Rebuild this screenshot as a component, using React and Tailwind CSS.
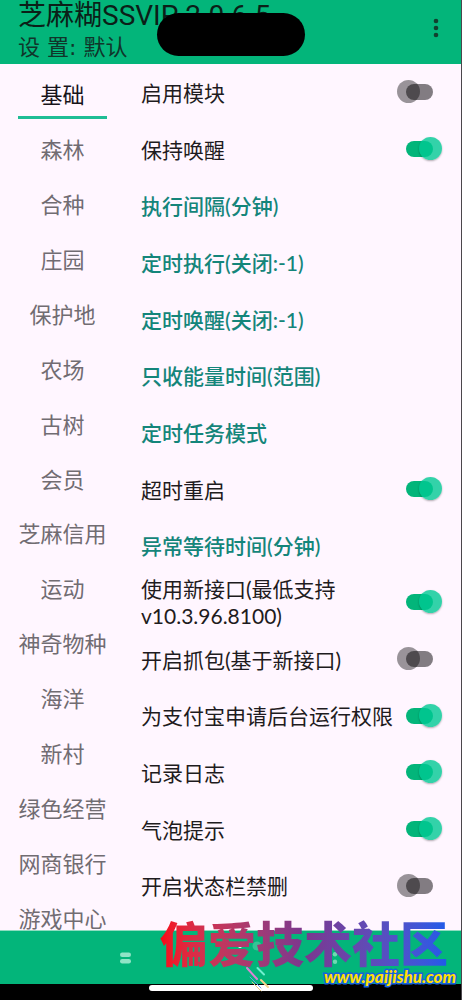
import { useState } from "react";

const tabs = [
  "基础", "森林", "合种", "庄园", "保护地", "农场", "古树", "会员",
  "芝麻信用", "运动", "神奇物种", "海洋", "新村", "绿色经营", "网商银行", "游戏中心",
];

const settings = [
  { label: "启用模块", on: false },
  { label: "保持唤醒", on: true },
  { label: "执行间隔(分钟)" },
  { label: "定时执行(关闭:-1)" },
  { label: "定时唤醒(关闭:-1)" },
  { label: "只收能量时间(范围)" },
  { label: "定时任务模式" },
  { label: "超时重启", on: true },
  { label: "异常等待时间(分钟)" },
  { label: "使用新接口(最低支持v10.3.96.8100)", on: true },
  { label: "开启抓包(基于新接口)", on: false },
  { label: "为支付宝申请后台运行权限", on: true },
  { label: "记录日志", on: true },
  { label: "气泡提示", on: true },
  { label: "开启状态栏禁删", on: false },
];

function SwitchRow({ label, on }) {
  const [checked, setChecked] = useState(on);
  return (
    <label className="flex min-h-0 flex-1 items-center justify-between text-[#1e1b20]">
      <span className="max-w-[256px]">{label}</span>
      <input
        type="checkbox"
        role="switch"
        checked={checked}
        onChange={(e) => setChecked(e.target.checked)}
        className="relative mr-2 h-4 w-[27px] shrink-0 appearance-none rounded-full bg-[#827c82] before:absolute before:-left-[9px] before:-top-1 before:size-[23px] before:rounded-full before:bg-black/40 checked:bg-[#03b57a] checked:before:left-[13px] checked:before:bg-[rgba(0,201,147,0.8)] checked:before:shadow-[0_1px_2px_rgba(0,0,0,0.3)]"
      />
    </label>
  );
}

function ValueRow({ label }) {
  return (
    <button type="button" className="flex min-h-0 flex-1 items-center text-left font-medium text-[#14857a]">
      {label}
    </button>
  );
}

function Header() {
  return (
    <header className="relative flex h-16 shrink-0 items-start justify-between overflow-hidden bg-[#03b57a] px-[18px]">
      <div>
        <h1 className="h-8 whitespace-nowrap font-['Roboto','Noto_Sans_CJK_SC',sans-serif] text-[28px] leading-8 text-[#0b1f18]">芝麻糊SSVIP 2.0.6.5</h1>
        <p className="whitespace-pre font-['DejaVu_Sans','Noto_Sans_CJK_SC',sans-serif] text-[22px] leading-8 text-[#10352a]">设 置: 默认</p>
      </div>
      <button type="button" aria-label="更多选项" className="mt-4 flex h-6 w-[14px] items-center justify-center">
        <svg viewBox="0 0 6 20" className="h-5 w-[6px] fill-[#12402f]">
          <circle cx="3" cy="3" r="2.3" />
          <circle cx="3" cy="10" r="2.3" />
          <circle cx="3" cy="17" r="2.3" />
        </svg>
      </button>
      <div className="absolute left-1/2 top-[13px] h-[43px] w-[148px] -translate-x-1/2 rounded-full bg-black" />
    </header>
  );
}

function Footer() {
  return (
    <footer className="relative shrink-0">
      <nav className="grid h-[54px] grid-cols-3 items-center border-t border-[#8fdcc0] bg-[#03b57a] px-6">
        <button type="button" aria-label="菜单" className="flex justify-center pl-[66px]">
          <svg viewBox="0 0 12 12" className="size-3 fill-[#90e4c6]">
            <rect y="0.5" width="11" height="4.5" rx="2.2" />
            <rect y="7" width="11" height="4.5" rx="2.2" />
          </svg>
        </button>
        <button type="button" aria-label="主页" className="flex justify-center pb-6 pl-10">
          <svg viewBox="0 0 24 10" className="h-[10px] w-6">
            <circle cx="2" cy="5" r="2" fill="#fff" />
            <circle cx="19" cy="5" r="4.5" fill="#34c596" />
          </svg>
        </button>
        <button type="button" aria-label="返回" className="flex justify-center pr-[66px]">
          <svg viewBox="0 0 12 12" className="size-3 fill-[#6fd9b3]">
            <circle cx="6" cy="2.2" r="2.2" />
            <circle cx="6" cy="9.8" r="2.2" />
          </svg>
        </button>
      </nav>
      <div className="flex h-4 justify-center bg-black pt-px">
        <div className="h-[6px] w-[164px] rounded-full bg-white" />
      </div>
      <div className="absolute bottom-[14px] right-[5px] flex flex-col items-end">
        <span className="mr-2 bg-linear-to-r from-[#f80510] via-[#7b368e] to-[#1c5bea] bg-clip-text font-['Noto_Sans_CJK_SC',sans-serif] text-[48px] font-black leading-[54px] text-transparent">
          偏爱技术社区
        </span>
        <a
          href="#paijishu"
          className="font-['Lato',sans-serif] text-[17px] font-black italic leading-[18px] text-[#ffe000] [paint-order:stroke_fill] [-webkit-text-stroke:3px_#1763dc]"
        >
          www.paijishu.com
        </a>
      </div>
      <svg viewBox="0 0 30 30" className="absolute bottom-[6px] left-1/2 ml-3 size-[30px]" fill="none" strokeLinecap="round">
        <path d="M4 4 14 15" stroke="#dc83d5" strokeWidth="2" />
        <path d="M14.500 4 21 10.500" stroke="#72efcf" strokeWidth="2" />
        <path d="M18 16 25 23" stroke="#f6d48c" strokeWidth="2" />
        <path d="M7 13 18 24" stroke="#6c9fe8" strokeWidth="1" />
        <path d="M9 18 18 27" stroke="#e9c98b" strokeWidth="1" />
      </svg>
    </footer>
  );
}

export default function App() {
  const [active, setActive] = useState(0);
  return (
    <div className="flex h-screen min-h-[760px] flex-col overflow-hidden border-r border-[#4b474c] bg-[#fff6ff] font-['Lato','Noto_Sans_CJK_SC',sans-serif]">
      <Header />
      <main className="flex min-h-0 flex-1 overflow-hidden">
        <div role="tablist" aria-orientation="vertical" className="-mb-4 flex w-[125px] shrink-0 flex-col px-[18px] pt-1 text-[22px] leading-6">
          {tabs.map((tab, i) => (
            <button
              key={tab}
              type="button"
              role="tab"
              aria-selected={i === active}
              onClick={() => setActive(i)}
              className={
                i === active
                  ? "relative min-h-0 flex-1 whitespace-nowrap text-[#17131a] after:absolute after:inset-x-0 after:bottom-1 after:h-[3px] after:bg-[#1fbd95]"
                  : "min-h-0 flex-1 whitespace-nowrap text-[#716c72]"
              }
            >
              {tab}
            </button>
          ))}
        </div>
        <section className="flex min-w-0 flex-1 flex-col pb-4 pl-4 pr-5 text-[21px] leading-[27px]">
          {settings.map((item) =>
            item.on === undefined ? (
              <ValueRow key={item.label} label={item.label} />
            ) : (
              <SwitchRow key={item.label} label={item.label} on={item.on} />
            )
          )}
        </section>
      </main>
      <Footer />
    </div>
  );
}
